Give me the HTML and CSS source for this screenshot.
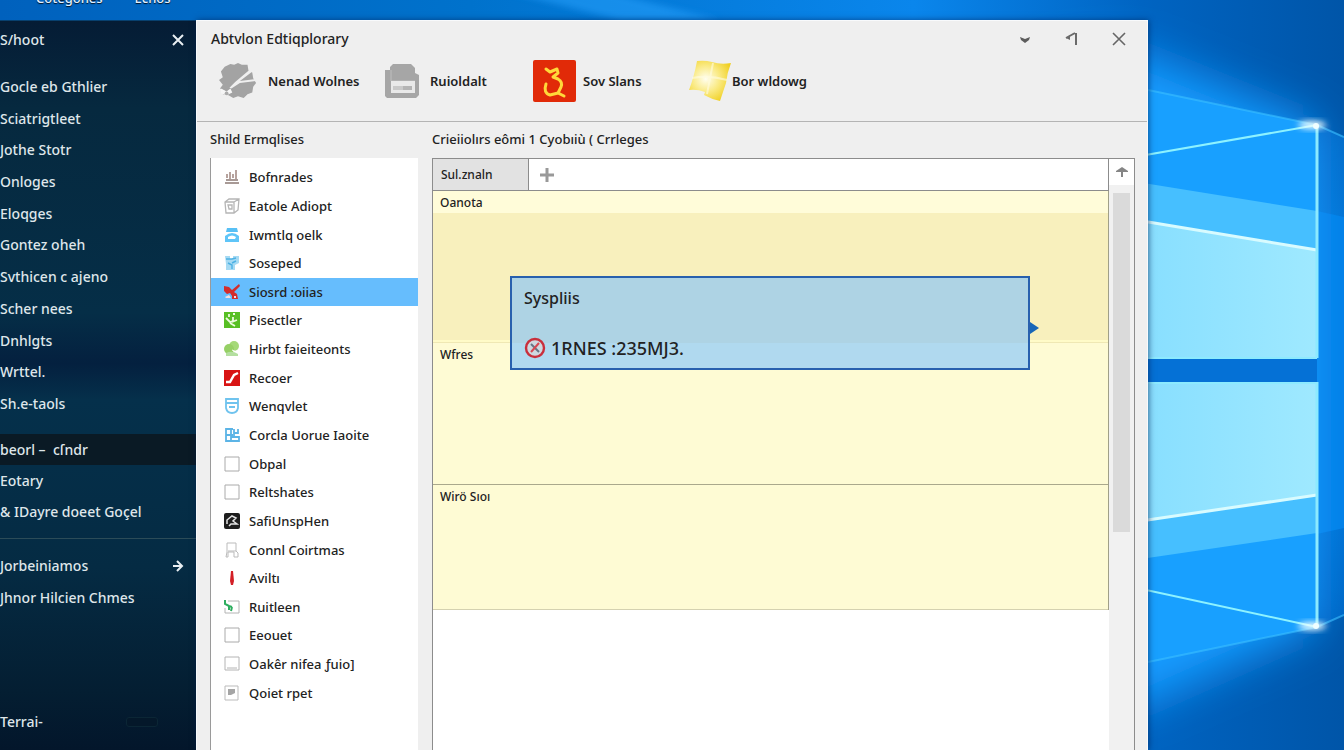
FILE: index.html
```
<!DOCTYPE html>
<html lang="en">
<head>
    <meta charset="UTF-8">
    <meta name="viewport" content="width=device-width, initial-scale=1.0">
    <title>Abtvlon Edtiqplorary</title>
    <link rel="stylesheet" href="styles.css">
</head>
<body>
    <svg class="wallpaper" viewBox="0 0 1344 750" preserveAspectRatio="xMaxYMid slice" aria-hidden="true">
        <defs>
            <linearGradient id="sky" x1="0" x2="1" y1="0" y2="0">
                <stop offset="0" stop-color="#0061bd"/>
                <stop offset="0.35" stop-color="#0072cc"/>
                <stop offset="0.68" stop-color="#0a86ec"/>
                <stop offset="0.85" stop-color="#0064c2"/>
                <stop offset="1" stop-color="#0055a8"/>
            </linearGradient>
            <linearGradient id="side" x1="0" x2="0" y1="0" y2="1">
                <stop offset="0" stop-color="#0668c4"/>
                <stop offset="0.5" stop-color="#0482ea"/>
                <stop offset="1" stop-color="#0062c0"/>
            </linearGradient>
            <linearGradient id="pane" x1="0" x2="1" y1="0" y2="0">
                <stop offset="0" stop-color="#82dcff"/>
                <stop offset="1" stop-color="#9fe9ff"/>
            </linearGradient>
            <filter id="soft" x="-50%" y="-50%" width="200%" height="200%"><feGaussianBlur stdDeviation="22"/></filter>
            <filter id="glow" x="-50%" y="-50%" width="200%" height="200%"><feGaussianBlur stdDeviation="3"/></filter>
        </defs>
        <rect width="1344" height="750" fill="url(#sky)"/>
        <path d="M1317 125 L1400 160 V590 L1317 627Z" fill="url(#side)"/>
        <path d="M1317 211 L1344 217 V528 L1317 534Z" fill="#047fe6"/>
        <path d="M1040 60 L1130 50 L1317 125 V627 L1130 710 L1040 690Z" fill="#129bff" filter="url(#soft)"/>
        <path d="M500 -10 L600 -10 L720 20 L620 20Z" fill="#2aa4ff" opacity="0.5" filter="url(#glow)"/>
        <path d="M1100 80 L1317 125 V358 H1100Z" fill="#18a0ff"/>
        <path d="M1100 176 L1317 211 V358 H1100Z" fill="#46bfff"/>
        <path d="M1100 214 L1317 250 V358 H1100Z" fill="url(#pane)"/>
        <path d="M1100 358 H1317 V382 H1100Z" fill="#0571d6"/>
        <path d="M1100 382 H1317 V627 L1100 672Z" fill="#18a0ff"/>
        <path d="M1100 382 H1317 V533 L1100 565Z" fill="#46bfff"/>
        <path d="M1100 382 H1317 V495 L1100 527Z" fill="url(#pane)"/>
        <g fill="none" stroke="#d8fbff">
            <path d="M1100 80 L1317 125 L1344 137 M1100 672 L1317 627 L1344 615" stroke="#3cc0ff" stroke-width="2" opacity="0.6"/>
            <path d="M1100 163 L1317 125 M1100 580 L1317 627" stroke="#8df2ff" stroke-width="2"/>
            <path d="M1100 214 L1317 250 M1100 527 L1317 495" stroke-width="3"/>
            <path d="M1317 125 V358 M1317 382 V627" stroke="#8ceaff" stroke-width="3"/>
            <path d="M1100 358 H1317 M1100 383 H1317" stroke="#8ceaff" stroke-width="2"/>
        </g>
        <g fill="#f0feff">
            <ellipse cx="1312" cy="125" rx="14" ry="4" filter="url(#glow)"/>
            <ellipse cx="1312" cy="626" rx="14" ry="4" filter="url(#glow)"/>
            <circle cx="1316" cy="126" r="3"/>
            <circle cx="1316" cy="626" r="3"/>
        </g>
    </svg>

    <div class="desktop">
        <header class="top-strip">
            <span>Cotegones</span>
            <span>Echos</span>
        </header>

        <nav class="side-menu">
            <div class="side-header">
                <h2>S/hoot</h2>
                <button class="icon-btn" aria-label="Close menu">
                    <svg width="12" height="12" viewBox="0 0 12 12"><path d="M1 1 L11 11 M11 1 L1 11" stroke="#e8eef2" stroke-width="2"/></svg>
                </button>
            </div>
            <ul class="side-list main-list">
                <li><a href="#">Gocle eb Gthlier</a></li>
                <li><a href="#">Sciatrigtleet</a></li>
                <li><a href="#">Jothe Stotr</a></li>
                <li><a href="#">Onloges</a></li>
                <li><a href="#">Eloqges</a></li>
                <li><a href="#">Gontez oheh</a></li>
                <li><a href="#">Svthicen c ajeno</a></li>
                <li><a href="#">Scher nees</a></li>
                <li><a href="#">Dnhlgts</a></li>
                <li><a href="#">Wrttel.</a></li>
                <li><a href="#">Sh.e-taols</a></li>
            </ul>
            <ul class="side-list recent-list">
                <li class="current"><a href="#">beorl –&nbsp; cſndr</a></li>
                <li><a href="#">Eotary</a></li>
                <li><a href="#">&amp; IDayre doeet Goçel</a></li>
            </ul>
            <ul class="side-list more-list">
                <li><a href="#">Jorbeiniamos
                    <svg width="12" height="12" viewBox="0 0 12 12"><path d="M1 6 H10 M5 1 L10 6 L5 11" fill="none" stroke="#e8eef2" stroke-width="2"/></svg></a></li>
                <li><a href="#">Jhnor Hilcien Chmes</a></li>
            </ul>
            <div class="side-footer">
                <a href="#">Terrai-</a>
                <span class="pill"></span>
            </div>
        </nav>

        <main class="window">
            <div class="title-bar">
                <h1>Abtvlon Edtiqplorary</h1>
                <div class="window-buttons">
                    <button class="icon-btn" aria-label="Minimize">
                        <svg width="14" height="14" viewBox="0 0 14 14"><path d="M2 5 L7 7 L12 5 L11 8 L7 11 L3 8Z" fill="#5c5c5c"/></svg>
                    </button>
                    <button class="icon-btn" aria-label="Restore">
                        <svg width="14" height="14" viewBox="0 0 14 14"><path d="M1 6 L10 1 M11 1 V13" fill="none" stroke="#6a6a6a" stroke-width="2"/><path d="M1 6 L5 3 V8Z" fill="#6a6a6a"/></svg>
                    </button>
                    <button class="icon-btn" aria-label="Close">
                        <svg width="14" height="14" viewBox="0 0 14 14"><path d="M1 1 L13 13 M13 1 L1 13" stroke="#666" stroke-width="1.6"/></svg>
                    </button>
                </div>
            </div>

            <div class="toolbar">
                <button>
                    <svg width="38" height="38" viewBox="0 0 40 40">
                        <path d="M6 5 L12 2 L16 3 L20 1 L24 3 L30 3 L31 9 L35 11 L36 17 L39 22 L36 26 L35 32 L30 34 L26 38 L20 36 L15 38 L10 35 L4 34 L6 30 L1 28 L4 24 L0 19 L4 16 L2 10Z" fill="#a3a3a3"/>
                        <path d="M36 5 L17 21 L11 27 L13 28 L22 22 L39 20 V18 L22 20 L38 8Z" fill="#efefef"/>
                        <path d="M2 28 L8 31 L12 28 L14 32 L8 35 L2 33Z" fill="#f6f6f6"/>
                        <circle cx="8" cy="33" r="2" fill="#aaa"/>
                    </svg>
                    Nenad Wolnes
                </button>
                <button>
                    <svg width="34" height="34" viewBox="0 0 34 34">
                        <path d="M0 6 H5 V3 L8 0 H26 L30 4 V9 L34 11 V31 L31 34 H2 L0 32Z" fill="#a6a6a6"/>
                        <path d="M6 6 V17 H30" fill="none" stroke="#bdbdbd"/>
                        <path d="M6 17 H30 V29 H6Z" fill="#e9e9e9"/>
                        <path d="M8 22 H18 V26 H8Z" fill="#c9c9c9"/>
                        <path d="M18 22 H27 V26 H18Z" fill="#b4b4b4"/>
                    </svg>
                    Ruioldalt
                </button>
                <button class="tight">
                    <svg width="43" height="42" viewBox="0 0 43 42">
                        <rect width="43" height="42" rx="2" fill="#e12a08"/>
                        <path d="M13 9 L17 12 L24 9 L25 13 L20 17 L25 19 Q30 22 28 27 L25 33 M13 24 Q10 33 17 35 L25 33 L31 36" fill="none" stroke="#ffd93a" stroke-width="3" stroke-linecap="round" stroke-linejoin="round"/>
                    </svg>
                    Sov Slans
                </button>
                <button class="no-gap">
                    <svg width="43" height="42" viewBox="0 0 43 42">
                        <defs>
                            <radialGradient id="flag" cx="0.4" cy="0.45" r="0.65">
                                <stop offset="0" stop-color="#fffef0"/>
                                <stop offset="0.5" stop-color="#faea84"/>
                                <stop offset="1" stop-color="#f0cf20"/>
                            </radialGradient>
                        </defs>
                        <path d="M8 1 Q16 0 23 2 Q32 5 42 3 Q38 13 37 23 L31 41 Q22 39 15 35 L16 32 Q8 29 0 30 Q5 17 8 1Z" fill="url(#flag)"/>
                        <path d="M24 3 L18 34 M3 18 Q20 15 38 20" fill="none" stroke="#fffbe0" stroke-width="2" opacity="0.6"/>
                    </svg>
                    Bor wldowg
                </button>
            </div>

            <div class="window-body">
                <section class="folder-pane">
                    <h2>Shild Ermqlises</h2>
                    <ul class="folder-list">
                        <li><button><svg class="icon" viewBox="0 0 16 16"><path d="M1 14 H15 M2 11 H14" stroke="#a89a96" stroke-width="2"/><path d="M3 9 V5 M6 10 V3 M9 9 V5 M12 10 V1" stroke="#b7a39e" stroke-width="2"/></svg>Bofnrades</button></li>
                        <li><button><svg class="icon" viewBox="0 0 16 16"><path d="M1 4 L5 1 H15 L14 12 L10 15 H2Z M1 4 H10 L10 15 M10 4 L15 1 M4 7 H8 V11 H5Z" fill="none" stroke="#b5b5b5" stroke-width="1.3"/></svg>Eatole Adiopt</button></li>
                        <li><button><svg class="icon" viewBox="0 0 16 16"><path d="M3 1 H13 L14 5 H2Z" fill="#58c0f5"/><path d="M1 15 V9 Q8 3 15 9 V15Z" fill="#5fc5f8"/><path d="M4 10 Q8 7 12 10 L11 12 H4Z" fill="#fff"/></svg>Iwmtlq oelk</button></li>
                        <li><button><svg class="icon" viewBox="0 0 16 16"><path d="M1 1 H6 V4 H9 V1 H15 V8 L11 10 V15 H2 V9Z" fill="#a6daf3"/><path d="M2 4 H8 L12 3 M4 8 L8 10 V14 M12 6 L8 8" fill="none" stroke="#4cb1e4" stroke-width="1.4"/></svg>Soseped</button></li>
                        <li class="selected"><button><svg class="icon" viewBox="0 0 16 16"><path d="M0 2 L5 3 L8 6 L15 0 L16 2 L10 8 L13 10 L14 15 H8 V12 L6 9 L3 10 L0 7Z" fill="#d42c2a"/><path d="M1 13 L5 11 L7 14 H2Z M10 12 H12 V14 H10Z" fill="#f7dede"/></svg>Siosrd :oiias</button></li>
                        <li><button><svg class="icon" viewBox="0 0 16 16"><rect width="16" height="16" fill="#58bf24"/><path d="M5 2 V5 M9 2 H11 M2 6 L6 10 L9 9 V5 M8 10 L13 8 M6 11 L11 14" fill="none" stroke="#edfbdf" stroke-width="1.8"/></svg>Pisectler</button></li>
                        <li><button><svg class="icon" viewBox="0 0 16 16"><circle cx="10" cy="5" r="5" fill="#a5d978"/><circle cx="5" cy="8" r="5" fill="#96d065"/><path d="M2 12 Q8 9 14 13 V15 H2Z" fill="#b4dfa0"/><path d="M8 9 L15 12" stroke="#fff"/></svg>Hirbt faieiteonts</button></li>
                        <li><button><svg class="icon" viewBox="0 0 16 16"><rect width="16" height="16" fill="#d81414"/><path d="M2 12 H6 L10 5 L14 3" fill="none" stroke="#fff" stroke-width="2.4"/></svg>Recoer</button></li>
                        <li><button><svg class="icon" viewBox="0 0 16 16"><path d="M2 1 H14 V10 Q13 15 8 15 Q3 15 2 10Z M2 5 H14 M5 9 H11" fill="none" stroke="#6fc3ee" stroke-width="1.8"/></svg>Wenqvlet</button></li>
                        <li><button><svg class="icon" viewBox="0 0 16 16"><path d="M9 2 H2 V14 H15 V10 H7 M2 8 H9 M7 2 V14 M10 2 V6 H14 V2 M10 6 V10" fill="none" stroke="#5cb4e6" stroke-width="1.8"/></svg>Corcla Uorue Iaoite</button></li>
                        <li><button><svg class="icon" viewBox="0 0 16 16"><path d="M1 1 H15 V15 H1Z" fill="#fff" stroke="#aaa"/></svg>Obpal</button></li>
                        <li><button><svg class="icon" viewBox="0 0 16 16"><path d="M1 1 H15 V15 H1Z" fill="#fff" stroke="#aaa"/></svg>Reltshates</button></li>
                        <li><button><svg class="icon" viewBox="0 0 16 16"><rect width="16" height="16" rx="2" fill="#1d1d1d"/><path d="M3 11 L3 7 L8 3 L12 5 L9 8 L13 11 H7 L5 13" fill="none" stroke="#e2e2e2" stroke-width="1.5"/></svg>SafiUnspHen</button></li>
                        <li><button><svg class="icon" viewBox="0 0 16 16"><path d="M3 1 H12 V9 L14 11 V15 H10 V10 H4 V15 H2 L3 10Z M4 9 H12" fill="none" stroke="#bbb"/></svg>Connl Coirtmas</button></li>
                        <li><button><svg class="icon" viewBox="0 0 16 16"><path d="M7 1 H9 L10 11 L9 15 H7 L6 11Z" fill="#d31f26"/></svg>Aviltı</button></li>
                        <li><button><svg class="icon" viewBox="0 0 16 16"><path d="M4 2 H15 V14 H1 V9" fill="#fff" stroke="#b4b4b4"/><path d="M1 1 V5 L5 7 L8 8 M5 7 V11 M8 8 L7 12" fill="none" stroke="#2fae60" stroke-width="2"/></svg>Ruitleen</button></li>
                        <li><button><svg class="icon" viewBox="0 0 16 16"><path d="M1 1 H15 V15 H1Z" fill="#fff" stroke="#aaa"/></svg>Eeouet</button></li>
                        <li><button><svg class="icon" viewBox="0 0 16 16"><path d="M1 1 H15 V14 H1Z M3 12 H13" fill="#fff" stroke="#b4b4b4"/></svg>Oakêr nifea ƒuio]</button></li>
                        <li><button><svg class="icon" viewBox="0 0 16 16"><path d="M1 1 H14 V15 H1Z" fill="#fff" stroke="#bbb"/><path d="M4 4 H11 V8 L7 10 H4Z" fill="#a5a5a5"/></svg>Qoiet rpet</button></li>
                    </ul>
                </section>

                <section class="detail-pane">
                    <h2>Crieiiolırs eômi 1 Cyobıiù ( Crrleges</h2>
                    <div class="detail-box">
                        <div class="detail-main">
                            <div class="tabs">
                                <button class="tab">Sul.znaln</button>
                                <button class="add-tab" aria-label="Add tab">
                                    <svg width="14" height="14" viewBox="0 0 14 14"><path d="M7 0 V14 M0 7 H14" stroke="#999" stroke-width="3"/></svg>
                                </button>
                            </div>
                            <div class="cards">
                                <article class="card first"><h3>Oanota</h3></article>
                                <article class="card second"><h3>Wfres</h3></article>
                                <article class="card third"><h3>Wirö Sıoı</h3></article>
                                <div class="tooltip" role="status">
                                    <h4>Syspliis</h4>
                                    <p>
                                        <svg width="22" height="22" viewBox="0 0 22 22"><circle cx="11" cy="11" r="9" fill="#cfd8e0" stroke="#c92f3c" stroke-width="2.4"/><path d="M7 7 L15 15" stroke="#667485" stroke-width="2"/><path d="M15 6 L7 15" stroke="#d84752" stroke-width="2"/></svg>
                                        1RNES :235MJ3.
                                    </p>
                                </div>
                            </div>
                        </div>
                        <div class="scrollbar">
                            <button class="icon-btn" aria-label="Scroll up">
                                <svg width="14" height="12" viewBox="0 0 14 12"><path d="M7 1 L13 5 V6 H8 V11 H6 V6 H1 V5Z" fill="#858585"/></svg>
                            </button>
                            <div class="thumb"></div>
                        </div>
                    </div>
                </section>
            </div>
        </main>
    </div>
</body>
</html>
```

FILE: styles.css
```
* {
    box-sizing: border-box;
}
body {
    margin: 0;
    font-family: "Noto Sans", "Open Sans", sans-serif;
    font-size: 13px;
    line-height: 20px;
    font-weight: 500;
    color: #222;
    background-color: #0068c4;
    overflow: hidden;
}
h1, h2, h3, h4, p, ul {
    margin: 0;
    padding: 0;
    font-size: inherit;
    font-weight: inherit;
}
ul {
    list-style: none;
}
a {
    color: inherit;
    text-decoration: none;
}
button {
    padding: 0;
    border: none;
    background: none;
    font: inherit;
    color: inherit;
    cursor: pointer;
}
svg {
    flex: none;
}
.wallpaper {
    position: absolute;
    top: 0;
    left: 0;
    width: 100%;
    height: 100%;
}
.desktop {
    position: relative;
    display: grid;
    grid-template-columns: 196px 1fr 196px;
    grid-template-rows: 20px 1fr;
    height: 100vh;
}
.icon-btn {
    display: flex;
    align-items: center;
    justify-content: center;
}

/* strip above the windows */
.top-strip {
    grid-column: 1 / -1;
    display: flex;
    align-items: flex-end;
    gap: 32px;
    height: 8px;
    padding-left: 36px;
    overflow: hidden;
    color: #e4f0fa;
    text-shadow: 0 1px 1px #012;
}

/* left menu */
.side-menu {
    display: flex;
    flex-direction: column;
    overflow: hidden;
    border-top: 1px solid #08406e;
    background: linear-gradient(#051c35, #06293f 12%, #052e47 40%, #04203f 47%, #05304b 52%, #052b43 75%, #041e32 92%, #03162b);
    color: #dfe6ea;
    font-size: 14px;
}
.side-header {
    display: flex;
    align-items: center;
    justify-content: space-between;
    height: 37px;
    margin-bottom: 13px;
    padding-right: 12px;
}
.side-list {
    display: grid;
    grid-auto-rows: 1fr;
}
.side-list a {
    display: flex;
    align-items: center;
    justify-content: space-between;
    height: 100%;
    padding-right: 12px;
}
.main-list {
    height: 349px;
    margin-bottom: 14px;
}
.recent-list {
    height: 94px;
    padding-bottom: 1px;
}
.current {
    background-color: #0a1a25;
}
.more-list {
    height: 76px;
    margin-top: 10px;
    padding-top: 11px;
    border-top: 1px solid #2c4c58;
}
.side-footer {
    display: flex;
    align-items: center;
    justify-content: space-between;
    height: 56px;
    margin-top: auto;
    padding-right: 38px;
}
.pill {
    width: 32px;
    height: 10px;
    border: 1px solid #0b2635;
    border-radius: 3px;
    background-color: #04182a;
}

/* main window */
.window {
    display: flex;
    flex-direction: column;
    min-width: 0;
    min-height: 0;
    border: 1px solid #f8fafc;
    border-bottom: none;
    background-color: #efefef;
    box-shadow: 1px 0 6px rgba(0, 30, 80, 0.6);
}
.title-bar {
    display: flex;
    align-items: center;
    justify-content: space-between;
    height: 36px;
    padding: 0 21px 0 14px;
    font-size: 14px;
}
.window-buttons {
    display: flex;
    gap: 33px;
}
.toolbar {
    display: grid;
    grid-template-columns: 166px 148px 156px auto;
    justify-content: start;
    height: 65px;
    padding: 0 0 16px 22px;
    border-bottom: 1px solid #b4b4b4;
    font-weight: 600;
}
.toolbar button {
    display: flex;
    align-items: center;
    gap: 11px;
}
.toolbar .tight {
    gap: 7px;
}
.toolbar .no-gap {
    gap: 0;
}
.window-body {
    flex: 1;
    display: grid;
    grid-template-columns: 208px 1fr;
    gap: 14px;
    min-height: 0;
    padding: 0 12px 0 13px;
}
.folder-pane,
.detail-pane {
    display: flex;
    flex-direction: column;
    min-width: 0;
    min-height: 0;
}
.window-body h2 {
    height: 36px;
    padding-top: 7px;
}

/* folder list */
.folder-list {
    flex: 1;
    display: grid;
    grid-template-rows: repeat(19, 1fr);
    padding: 5px 0 43px;
    border-left: 1px solid #9a9a9a;
    background-color: #fff;
}
.folder-list button {
    display: flex;
    align-items: center;
    gap: 9px;
    width: 100%;
    height: 100%;
    padding-left: 13px;
    text-align: left;
}
.folder-list .selected {
    background-color: #66bdfd;
}
.icon {
    width: 16px;
    height: 16px;
}

/* detail area */
.detail-box {
    flex: 1;
    display: flex;
    min-height: 0;
    border: 1px solid #8c8c8c;
    border-bottom: none;
    background-color: #fff;
    font-size: 12px;
}
.detail-main {
    flex: 1;
    min-width: 0;
}
.tabs {
    display: flex;
    height: 32px;
    border-right: 1px solid #8c8c8c;
    border-bottom: 1px solid #8c8c8c;
}
.tab {
    width: 96px;
    padding-left: 8px;
    border-right: 1px solid #8c8c8c;
    background-color: #e2e2e2;
    text-align: left;
}
.add-tab {
    display: flex;
    align-items: center;
    padding: 0 11px;
}
.cards {
    position: relative;
    border-right: 1px solid #a09f88;
}
.card {
    padding: 2px 7px;
    background-color: #fefbd4;
}
.first {
    height: 151px;
    border-bottom: 2px solid #fffbc8;
    background: linear-gradient(#fffcd9 22px, #f8f0bd 22px);
}
.second {
    height: 143px;
    border-top: 1px solid #efe8b4;
    border-bottom: 1px solid #aaa88c;
}
.third {
    height: 125px;
    border-bottom: 1px solid #d4d1b0;
}
.tooltip {
    position: absolute;
    top: 85px;
    left: 77px;
    right: 78px;
    height: 94px;
    padding: 10px 12px;
    border: 2px solid #2860ae;
    background: linear-gradient(#aed3e4 65px, #b0d9ef 65px);
    font-size: 16px;
}
.tooltip::after {
    content: "";
    position: absolute;
    top: 44px;
    right: -11px;
    border: 6px solid transparent;
    border-left: 9px solid #1766b8;
    border-right: none;
}
.tooltip p {
    display: flex;
    align-items: center;
    gap: 5px;
    height: 22px;
    margin-top: 29px;
    font-size: 18px;
}
.scrollbar {
    width: 25px;
    background-color: #f1f1f1;
}
.scrollbar .icon-btn {
    width: 100%;
    height: 26px;
    background-color: #fff;
}
.thumb {
    width: 17px;
    height: 339px;
    margin: 8px 4px;
    background-color: #dadada;
}
```
